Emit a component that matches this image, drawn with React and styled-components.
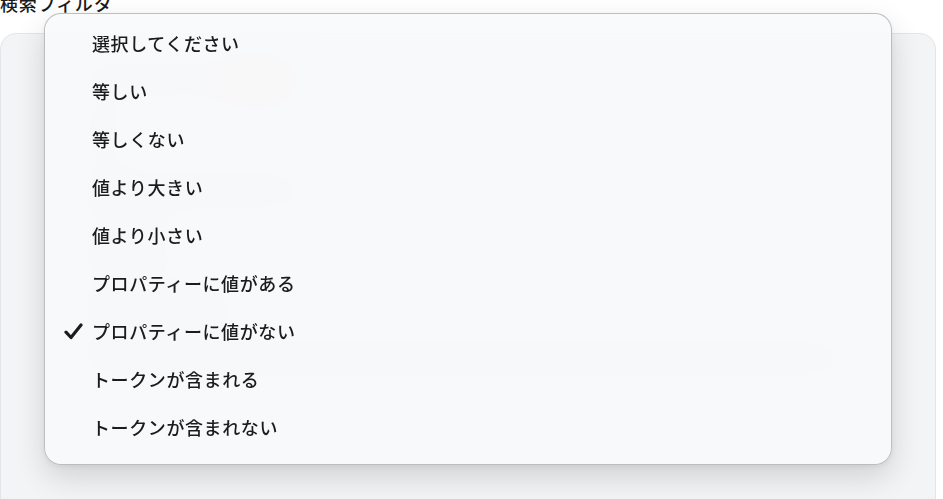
import React from "react";
import styled, { createGlobalStyle } from "styled-components";

const GlobalStyle = createGlobalStyle`
  html, body {
    margin: 0;
    padding: 0;
    background: #ffffff;
    overflow: hidden;
  }
  body {
    font-family: "Noto Sans CJK JP", "Noto Sans", "Liberation Sans", sans-serif;
    color: #222;
  }
`;

const Page = styled.div`
  position: relative;
  width: 943px;
  height: 499px;
  overflow: hidden;
`;

// heading sits partly above the viewport, as in the captured state
const Title = styled.h1`
  margin: -7px 0 0 0;
  height: 20px;
  font-size: 18px;
  line-height: 20px;
  font-weight: 500;
  color: #1a1a1a;
  letter-spacing: 0.8px;
`;

const Panel = styled.section`
  margin: 20px 7px 0 0;
  height: 520px;
  background: #f3f4f6;
  border: 1px solid #e4e5e8;
  border-radius: 16px;
  padding: 30px 40px 30px 70px;
  box-sizing: border-box;
  display: flex;
  flex-direction: column;
  gap: 28px;
`;

const FieldRow = styled.div`
  display: flex;
  align-items: center;
  gap: 8px;
  height: 28px;
`;

const Ghost = styled.span`
  display: inline-block;
  height: 16px;
  width: ${({ $w }) => $w}px;
  border-radius: 6px;
  background: ${({ $red }) => ($red ? "rgba(240, 90, 90, 0.35)" : "rgba(120, 124, 132, 0.16)")};
`;

const Menu = styled.ul`
  position: absolute;
  left: 44px;
  top: 13px;
  width: 848px;
  height: 452px;
  box-sizing: border-box;
  margin: 0;
  padding: 5px 0 14px;
  list-style: none;
  background: rgba(248, 249, 251, 0.88);
  backdrop-filter: blur(22px);
  border: 1px solid rgba(0, 0, 0, 0.24);
  border-radius: 17px;
  box-shadow: 0 12px 30px rgba(0, 0, 0, 0.14), 0 2px 6px rgba(0, 0, 0, 0.06);
`;

const Item = styled.li`
  display: flex;
  align-items: center;
  height: 48px;
  padding-left: 19px;
  font-size: 18px;
  font-weight: 500;
  color: #1c1c1c;
  letter-spacing: 0.6px;
`;

const CheckSlot = styled.span`
  width: 28px;
  display: flex;
  align-items: center;
`;

const Check = () => (
  <svg width="19" height="17" viewBox="0 0 19 17">
    <path
      d="M2 9.2 L7 14.5 L17 2"
      fill="none"
      stroke="#1c1c1c"
      strokeWidth="3.2"
      strokeLinecap="round"
      strokeLinejoin="round"
    />
  </svg>
);

const options = [
  "選択してください",
  "等しい",
  "等しくない",
  "値より大きい",
  "値より小さい",
  "プロパティーに値がある",
  "プロパティーに値がない",
  "トークンが含まれる",
  "トークンが含まれない",
];

const selected = "プロパティーに値がない";

export default function App() {
  return (
    <Page>
      <GlobalStyle />
      <Title>検索フィルタ</Title>
      <Panel>
        <FieldRow>
          <Ghost $w={150} />
          <Ghost $w={56} $red />
        </FieldRow>
        <FieldRow>
          <Ghost $w={60} />
        </FieldRow>
        <FieldRow>
          <Ghost $w={240} />
        </FieldRow>
        <FieldRow>
          <Ghost $w={110} />
        </FieldRow>
        <FieldRow>
          <Ghost $w={170} />
        </FieldRow>
        <FieldRow>
          <Ghost $w={780} />
        </FieldRow>
      </Panel>
      <Menu role="listbox">
        {options.map((o) => (
          <Item key={o} role="option" aria-selected={o === selected}>
            <CheckSlot>{o === selected && <Check />}</CheckSlot>
            {o}
          </Item>
        ))}
      </Menu>
    </Page>
  );
}
